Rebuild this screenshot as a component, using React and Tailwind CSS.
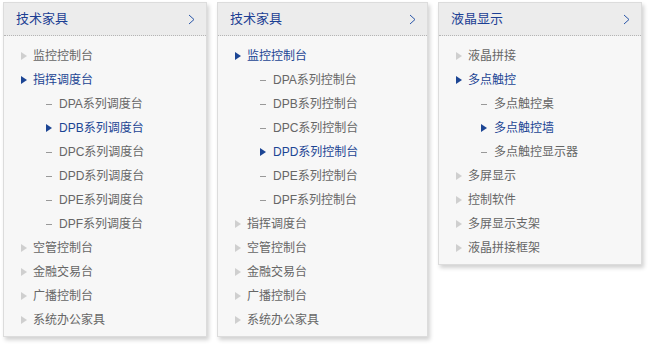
import React from 'react';

const menus = [
  {
    title: '技术家具',
    width: 'w-[204px]',
    items: [
      { label: '监控控制台' },
      {
        label: '指挥调度台',
        active: true,
        children: [
          { label: 'DPA系列调度台' },
          { label: 'DPB系列调度台', active: true },
          { label: 'DPC系列调度台' },
          { label: 'DPD系列调度台' },
          { label: 'DPE系列调度台' },
          { label: 'DPF系列调度台' },
        ],
      },
      { label: '空管控制台' },
      { label: '金融交易台' },
      { label: '广播控制台' },
      { label: '系统办公家具' },
    ],
  },
  {
    title: '技术家具',
    width: 'w-[211px]',
    items: [
      {
        label: '监控控制台',
        active: true,
        children: [
          { label: 'DPA系列控制台' },
          { label: 'DPB系列控制台' },
          { label: 'DPC系列控制台' },
          { label: 'DPD系列控制台', active: true },
          { label: 'DPE系列控制台' },
          { label: 'DPF系列控制台' },
        ],
      },
      { label: '指挥调度台' },
      { label: '空管控制台' },
      { label: '金融交易台' },
      { label: '广播控制台' },
      { label: '系统办公家具' },
    ],
  },
  {
    title: '液晶显示',
    width: 'w-[204px]',
    items: [
      { label: '液晶拼接' },
      {
        label: '多点触控',
        active: true,
        children: [
          { label: '多点触控桌' },
          { label: '多点触控墙', active: true },
          { label: '多点触控显示器' },
        ],
      },
      { label: '多屏显示' },
      { label: '控制软件' },
      { label: '多屏显示支架' },
      { label: '液晶拼接框架' },
    ],
  },
];

const Arrow = ({ active }) => (
  <svg width="6" height="8" viewBox="0 0 6 8" className="shrink-0">
    <path d="M0 0 L6 4 L0 8 Z" fill={active ? '#1c4594' : '#cfcfcf'} />
  </svg>
);

const SideMenu = ({ menu }) => (
  <div
    className={`${menu.width} border border-[#dcdcdc] bg-[#f7f7f7] shadow-[2px_3px_4px_rgba(0,0,0,0.18)]`}
  >
    <div className="flex h-[33px] items-center justify-between border-b border-dotted border-[#b5b5b5] bg-[#ececec] pl-[12px] pr-[11px]">
      <span className="text-[13px] text-[#1c3f94]">{menu.title}</span>
      <svg width="7" height="11" viewBox="0 0 7 11">
        <path d="M1 1 L6 5.5 L1 10" fill="none" stroke="#2a56a8" strokeWidth="1" />
      </svg>
    </div>
    <ul className="pt-[8px] pb-[4px]">
      {menu.items.map((item, i) => (
        <li key={i}>
          <div className="flex h-[24px] items-center gap-[6px] pl-[17px]">
            <Arrow active={item.active} />
            <span className={item.active ? 'text-[#1c4594]' : 'text-[#666666]'}>{item.label}</span>
          </div>
          {item.children &&
            item.children.map((child, j) => (
              <div key={j} className="flex h-[24px] items-center pl-[42px]">
                <span className="flex w-[13px] shrink-0 items-center">
                  {child.active ? (
                    <Arrow active />
                  ) : (
                    <span className="block h-px w-[6px] bg-[#999999]" />
                  )}
                </span>
                <span className={child.active ? 'text-[#1c4594]' : 'text-[#666666]'}>{child.label}</span>
              </div>
            ))}
        </li>
      ))}
    </ul>
  </div>
);

const App = () => {
  return (
    <div
      className="flex min-h-[350px] items-start gap-[10px] bg-white pl-[3px] pt-[2px] text-[12px]"
      style={{ fontFamily: '"Liberation Sans", "Noto Sans CJK SC", sans-serif' }}
    >
      {menus.map((menu, i) => (
        <SideMenu key={i} menu={menu} />
      ))}
    </div>
  );
};

export default App;
